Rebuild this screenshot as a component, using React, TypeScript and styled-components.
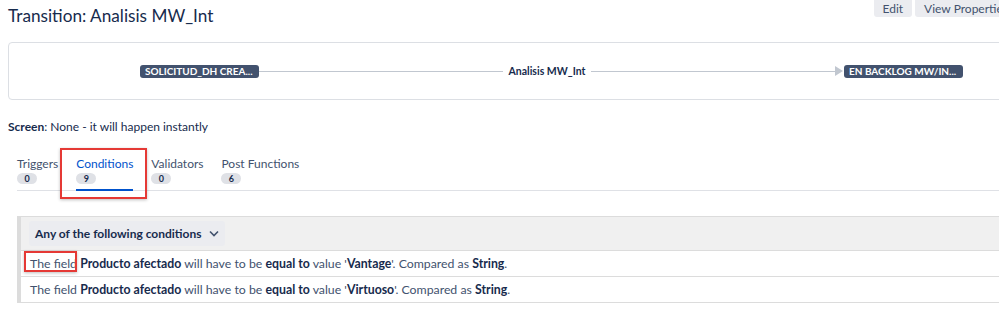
import React, { FC } from 'react'
import styled, { createGlobalStyle } from 'styled-components'

const GlobalStyle = createGlobalStyle`
  html, body {
    margin: 0;
    padding: 0;
    background: #fff;
    overflow: hidden;
  }
  body {
    font-family: Lato, "Noto Sans", sans-serif;
    color: #172b4d;
  }
`

const Page = styled.div`
  width: 1100px;
  padding-left: 8px;
`

const HeaderRow = styled.div`
  display: flex;
  align-items: flex-start;
  height: 42px;
`

const Title = styled.h2`
  flex: 1;
  margin: 5px 0 0;
  font-size: 17.2px;
  font-weight: 400;
  color: #172b4d;
`

const ButtonGroup = styled.div`
  display: flex;
  gap: 3px;
  margin-right: 91px;
`

const Button = styled.button`
  height: 17px;
  padding: 0 9px;
  border: none;
  border-radius: 0 0 3px 3px;
  background: #ebecf0;
  color: #42526e;
  font-family: inherit;
  font-size: 12px;
  line-height: 17px;
`

const Diagram = styled.div`
  width: 1087px;
  height: 58px;
  box-sizing: border-box;
  border: 1px solid #dcdfe4;
  border-radius: 4px;
  display: flex;
  align-items: center;
  padding: 0 131px;
`

const Status = styled.span`
  flex-shrink: 0;
  width: 119px;
  height: 13px;
  box-sizing: border-box;
  border-radius: 3px;
  background: #42526e;
  color: #fff;
  font-size: 10px;
  font-weight: 700;
  line-height: 13px;
  padding-left: 5px;
  white-space: nowrap;
  overflow: hidden;
`

const Line = styled.div`
  flex: 1;
  height: 1px;
  background: #c1c7d0;
`

const LineLabel = styled.span`
  padding: 0 6px;
  font-size: 10.5px;
  font-weight: 700;
  color: #172b4d;
`

const Arrow = styled.span`
  width: 0;
  height: 0;
  border-top: 5px solid transparent;
  border-bottom: 5px solid transparent;
  border-left: 8px solid #c1c7d0;
  margin-right: 1px;
`

const ScreenLine = styled.p`
  margin: 19px 0 0;
  font-size: 12px;
  color: #172b4d;
  b {
    font-weight: 700;
  }
`

const Tabs = styled.div`
  display: flex;
  gap: 18px;
  margin: 22px 0 0 9px;
  border-bottom: 1px solid #dfe1e6;
  padding-bottom: 6px;
`

const Tab = styled.div<{ $active?: boolean }>`
  position: relative;
  display: flex;
  flex-direction: column;
  align-items: flex-start;
  gap: 2px;
  color: ${p => (p.$active ? '#0052cc' : '#42526e')};
  font-size: 12px;
  line-height: 15px;

  &::after {
    content: '';
    display: ${p => (p.$active ? 'block' : 'none')};
    position: absolute;
    left: 0;
    right: 0;
    bottom: -7px;
    height: 2px;
    background: #0052cc;
  }
`

const Badge = styled.span`
  min-width: 20px;
  height: 11px;
  border-radius: 6px;
  background: #dfe1e6;
  color: #172b4d;
  font-size: 9px;
  font-weight: 700;
  line-height: 11px;
  text-align: center;
`

const Highlight = styled.span`
  position: absolute;
  border: 2px solid #e53935;
  box-shadow: 0 1px 3px rgba(0, 0, 0, 0.25);
  pointer-events: none;
`

const ConditionBlock = styled.div`
  margin: 25px 0 0 9px;
  border-left: 4px solid #dcdcdc;
  border-top: 1px solid #dcdcdc;
`

const BlockHeader = styled.div`
  background: #f0f0f0;
  padding: 4px 8px;
  border-bottom: 1px solid #dcdcdc;
`

const Operator = styled.div`
  display: inline-flex;
  align-items: center;
  gap: 7px;
  height: 25px;
  padding: 0 6px;
  background: #ebecf0;
  border-radius: 3px;
  font-size: 12px;
  font-weight: 700;
  color: #172b4d;
`

const Row = styled.div`
  position: relative;
  height: 25px;
  line-height: 25px;
  padding-left: 9px;
  border-bottom: 1px solid #dcdcdc;
  font-size: 12.3px;
  color: #42526e;
  b {
    color: #172b4d;
    font-weight: 700;
  }
`

const Chevron: FC = () => (
  <svg width="10" height="7" viewBox="0 0 10 7" fill="none">
    <path d="M1 1.5 L5 5.5 L9 1.5" stroke="#42526e" strokeWidth="1.6" />
  </svg>
)

const conditions = ['Vantage', 'Virtuoso']

const tabs = [
  { name: 'Triggers', count: 0 },
  { name: 'Conditions', count: 9, active: true },
  { name: 'Validators', count: 0 },
  { name: 'Post Functions', count: 6 },
]

export default function App() {
  return (
    <Page>
      <GlobalStyle />
      <HeaderRow>
        <Title>Transition: Analisis MW_Int</Title>
        <ButtonGroup>
          <Button>Edit</Button>
          <Button>View Properties</Button>
        </ButtonGroup>
      </HeaderRow>

      <Diagram>
        <Status>SOLICITUD_DH CREA...</Status>
        <Line />
        <LineLabel>Analisis MW_Int</LineLabel>
        <Line />
        <Arrow />
        <Status>EN BACKLOG MW/IN...</Status>
      </Diagram>

      <ScreenLine>
        <b>Screen</b>: None - it will happen instantly
      </ScreenLine>

      <Tabs>
        {tabs.map(t => (
          <Tab key={t.name} $active={t.active}>
            {t.name}
            <Badge>{t.count}</Badge>
            {t.active && <Highlight style={{ left: -16, right: -14, top: -8, bottom: -15 }} />}
          </Tab>
        ))}
      </Tabs>

      <ConditionBlock>
        <BlockHeader>
          <Operator>
            Any of the following conditions <Chevron />
          </Operator>
        </BlockHeader>
        {conditions.map((c, i) => (
          <Row key={c}>
            <span>The field</span> <b>Producto afectado</b> will have to be <b>equal to</b> value '<b>{c}</b>'.
            Compared as <b>String</b>.
            {i === 0 && <Highlight style={{ left: 3, top: 0, width: 49, height: 17 }} />}
          </Row>
        ))}
      </ConditionBlock>
    </Page>
  )
}
